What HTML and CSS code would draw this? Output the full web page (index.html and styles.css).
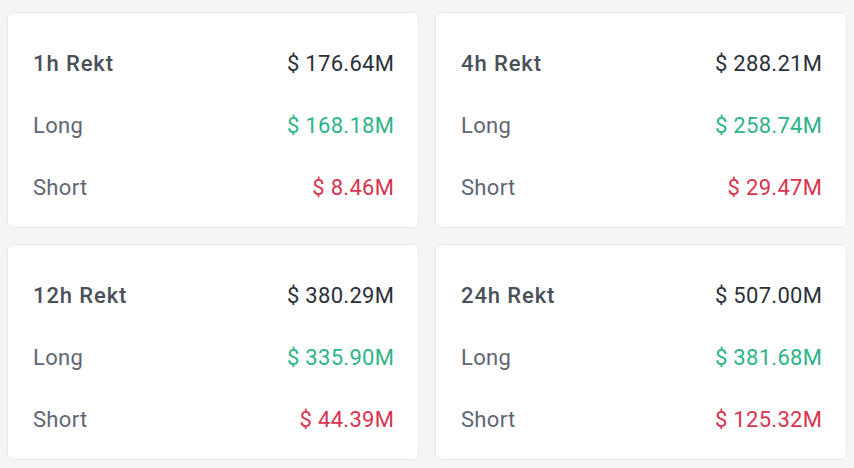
FILE: index.html
```html
<!DOCTYPE html>
<html>
<head>
<meta charset="utf-8">
<link rel="stylesheet" href="styles.css">
</head>
<body>
<div class="grid">
  <div class="card">
    <div class="row"><span class="title">1h Rekt</span><span class="val">$ 176.64M</span></div>
    <div class="row"><span class="label">Long</span><span class="val up">$ 168.18M</span></div>
    <div class="row"><span class="label">Short</span><span class="val down">$ 8.46M</span></div>
  </div>
  <div class="card">
    <div class="row"><span class="title">4h Rekt</span><span class="val">$ 288.21M</span></div>
    <div class="row"><span class="label">Long</span><span class="val up">$ 258.74M</span></div>
    <div class="row"><span class="label">Short</span><span class="val down">$ 29.47M</span></div>
  </div>
  <div class="card">
    <div class="row"><span class="title">12h Rekt</span><span class="val">$ 380.29M</span></div>
    <div class="row"><span class="label">Long</span><span class="val up">$ 335.90M</span></div>
    <div class="row"><span class="label">Short</span><span class="val down">$ 44.39M</span></div>
  </div>
  <div class="card">
    <div class="row"><span class="title">24h Rekt</span><span class="val">$ 507.00M</span></div>
    <div class="row"><span class="label">Long</span><span class="val up">$ 381.68M</span></div>
    <div class="row"><span class="label">Short</span><span class="val down">$ 125.32M</span></div>
  </div>
</div>
</body>
</html>
```
FILE: styles.css
```css
html, body {
  margin: 0;
  padding: 0;
  background: #f5f5f5;
}
body {
  font-family: Roboto, "Liberation Sans", sans-serif;
  width: 854px;
  height: 468px;
}
.grid {
  display: grid;
  grid-template-columns: 1fr 1fr;
  gap: 16px;
  padding: 12px 7px 8px 7px;
}
.card {
  background: #fff;
  border: 1px solid #e8e8e8;
  border-radius: 6px;
  height: 216px;
  box-sizing: border-box;
  padding: 19px 24px 9px 25px;
}
.row {
  display: flex;
  justify-content: space-between;
  align-items: center;
  height: 62px;
  font-size: 22px;
  letter-spacing: 0.3px;
}
.title {
  color: #4a5059;
  font-weight: 500;
  letter-spacing: 0.9px;
}
.label {
  color: #5e6673;
}
.val {
  color: #2b3139;
  margin-right: -0.3px;
}
.val.up { color: #2db48a; }
.val.down { color: #d83450; }
```
